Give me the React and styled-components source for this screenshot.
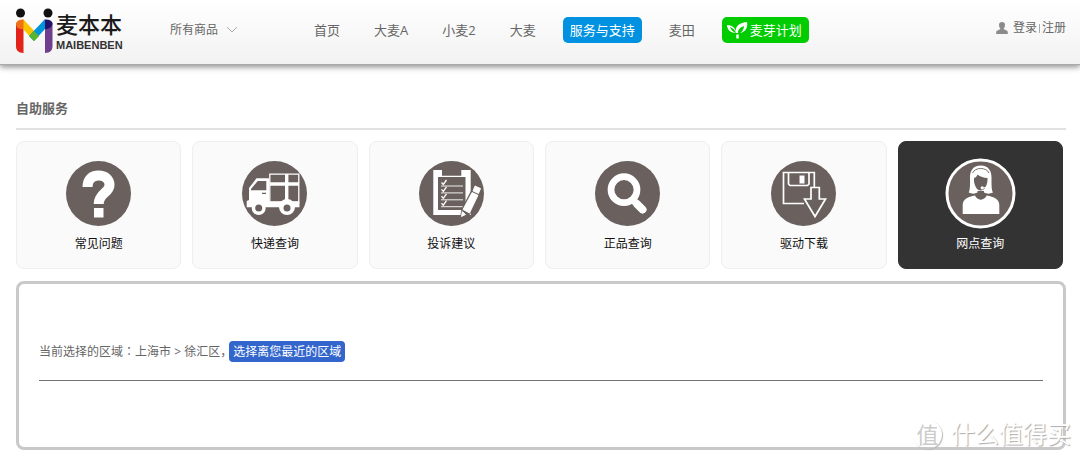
import React from "react";
import styled, { createGlobalStyle } from "styled-components";

const GlobalStyle = createGlobalStyle`
  * { box-sizing: border-box; }
  body {
    margin: 0;
    background: #fff;
    color: #666;
    font-family: "Open Sans", "Noto Sans CJK SC", sans-serif;
    font-size: 12px;
    line-height: 20px;
  }
  a { color: inherit; text-decoration: none; }
  svg { display: block; flex: none; }
`;

const Header = styled.header`
  display: flex;
  align-items: center;
  height: 64px;
  padding: 0 14px 4px 15px;
  background: linear-gradient(#fff, #f2f2f2);
  box-shadow: 0 1px 1px #aaa, 0 3px 6px rgba(0, 0, 0, 0.45);
`;

const Logo = styled.a`
  display: flex;
  align-items: center;
  gap: 3px;
  width: 155px;
  padding-top: 2px;
  color: #1a1a1a;
`;

const LogoText = styled.span`
  display: flex;
  flex-direction: column;
  gap: 6px;
`;

const LogoName = styled.span`
  font-family: "Noto Sans CJK SC", sans-serif;
  font-size: 22px;
  line-height: 22px;
  font-weight: 500;
`;

const LogoLatin = styled.span`
  font: bold 11px/11px "Liberation Sans", sans-serif;
  color: #333;
`;

const CategoryButton = styled.button`
  display: flex;
  align-items: center;
  gap: 8px;
  width: 137px;
  padding: 0;
  border: 0;
  background: none;
  color: #666;
  font: inherit;
  cursor: pointer;
`;

const Nav = styled.nav`
  display: flex;
  align-items: center;
  gap: 20px;
  font-size: 13px;
`;

const NavLink = styled.a`
  display: flex;
  align-items: center;
  gap: 2px;
  height: 26px;
  padding: 0 7px;
  border-radius: 5px;
  white-space: nowrap;
  background: ${(p) => p.$fill || "none"};
  color: ${(p) => (p.$fill ? "#fff" : "#666")};
  & > svg { margin-left: -2px; }
`;

const Account = styled.div`
  display: flex;
  align-items: center;
  gap: 2px;
  margin-left: auto;
  padding-bottom: 4px;
  white-space: nowrap;
  & > svg { margin-right: 3px; }
`;

const Divider = styled.span`
  width: 1px;
  height: 9px;
  background: #aaa;
`;

const Main = styled.main`
  padding: 34px 14px 10px 16px;
`;

const Title = styled.h1`
  margin: 0;
  padding-bottom: 10px;
  border-bottom: 2px solid #e1e1e1;
  font-size: 13px;
  line-height: 20px;
  font-weight: bold;
`;

const Services = styled.div`
  display: grid;
  grid-template-columns: repeat(6, 1fr);
  gap: 11px;
  margin: 11px 3px 12px 0;
`;

const Card = styled.a`
  display: flex;
  flex-direction: column;
  align-items: center;
  gap: 8px;
  height: 128px;
  padding-top: 19px;
  border: 1px solid ${(p) => (p.$active ? "#333" : "#eee")};
  border-radius: 8px;
  background: ${(p) => (p.$active ? "#333" : "#fafafa")};
  color: ${(p) => (p.$active ? "#fff" : "#111")};
`;

const Panel = styled.section`
  position: relative;
  padding: 57px 20px 66px;
  border: 3px solid #c9c9c9;
  border-radius: 8px;
`;

const Region = styled.div`
  display: flex;
  align-items: center;
  padding-bottom: 18px;
  border-bottom: 1px solid #707070;
`;

const Colon = styled.span`
  font-family: "Noto Sans CJK TC", sans-serif;
`;

const RegionButton = styled.button`
  height: 21px;
  margin-left: -3px;
  padding: 0 4px;
  border: 0;
  border-radius: 4px;
  background: #3366cc;
  color: #fff;
  font: inherit;
  cursor: pointer;
`;

const Watermark = styled.div`
  position: absolute;
  right: -8px;
  bottom: -2px;
  display: flex;
  align-items: center;
  gap: 9px;
  color: #fff;
  font-size: 24px;
  line-height: 30px;
  text-shadow: 1px 1px 1px #aaa;
`;

const Seal = styled.span`
  width: 29px;
  height: 29px;
  border-radius: 50%;
  color: #ccc;
  font-size: 22px;
  line-height: 28px;
  text-align: center;
  text-shadow: none;
  box-shadow: 1px 1px 1px #bbb;
`;

const DISC = "#6a615e";

function LogoMark() {
  return (
    <svg width="38" height="46" viewBox="0 0 38 46" aria-hidden="true">
      <circle cx="5.5" cy="5" r="4.5" fill="#111" />
      <circle cx="33" cy="5" r="4.500" fill="#111" />
      <path d="M1 15 8.500 20V45C3 45 1 42 1 38Z" fill="#e2231a" />
      <path d="M37.500 15 30 20V45C35.500 45 37.500 42 37.500 38Z" fill="#6f3f8f" />
      <path d="M8 11 24 28 19 33 8 21Z" fill="#fcc300" />
      <path d="M1 15C2 13 5 11 8.500 11.500V21C5 21 1 21 1 15Z" fill="#ee7318" />
      <path d="M30 11 14 28 19 33 30 21Z" fill="#0095da" />
      <path d="M19 23 24 28 19 33 14 28Z" fill="#57b530" />
      <path d="M30 11.500C34 11 37 13 37.500 15 37.500 19 34 21 30 21Z" fill="#24126a" />
    </svg>
  );
}

function Chevron() {
  return (
    <svg width="12" height="8" viewBox="0 0 12 8" fill="none" stroke="#aaa" aria-hidden="true">
      <path d="M1 1 6 6 11 1" />
    </svg>
  );
}

function Sprout() {
  return (
    <svg width="21" height="18" viewBox="0 0 21 18" aria-hidden="true">
      <path d="M9 12C8 7 10 2 20 1c1 5-1 10-7 11 2-1 4-4 4-7-3 1-6 3-6 7Z" fill="#fff" />
      <path d="M9 12C4 12 0 9 0 4c5 0 9 3 9 8C8 9 6 7 3 6c1 3 3 5 6 6Z" fill="#fff" />
      <path d="M10.500 13.500v4" stroke="#fff" strokeWidth="2.500" />
    </svg>
  );
}

function Person() {
  return (
    <svg width="12" height="12" viewBox="0 0 12 12" fill="#8b8b8b" aria-hidden="true">
      <path d="M6 0c2 0 3 1 3 3S8 6 7.500 7l4 2 .5 3H0l.5-3 4-2C4 6 3 5 3 3S4 0 6 0Z" />
    </svg>
  );
}

function Disc({ ring, children }) {
  return (
    <svg width="65" height="65" viewBox="0 0 65 65" overflow="visible" aria-hidden="true">
      <circle cx="32.5" cy="32.5" r="32.5" fill={DISC} />
      {ring && <circle cx="32.5" cy="32.5" r="33.5" fill="none" stroke="#fff" strokeWidth="3" />}
      {children}
    </svg>
  );
}

const QuestionIcon = () => (
  <Disc>
    <path
      d="M21.500 26C21.500 18 26 14.500 32.500 14.500S43.500 18 43.500 24C43.500 32 32.700 32 32.700 43"
      fill="none"
      stroke="#fff"
      strokeWidth="10"
    />
    <path d="M28 47h9.500v9.500H28Z" fill="#fff" />
  </Disc>
);

const TruckIcon = () => (
  <Disc>
    <path d="M7 27 14.500 17.300H27V40.700H57.500V46.300H4.700V40L7 39Z" fill="#fff" />
    <path d="M9 29.300V28L15.700 20H24.300V29.300ZM20 31.700h4V33h-4Z" fill={DISC} />
    <path d="M27.800 13.200H56.800V41H27.800Z" fill="none" stroke="#fff" strokeWidth="1.300" />
    <path d="M27.800 23H57M44.700 13V41" fill="none" stroke="#fff" strokeWidth="3.400" />
    <circle cx="16.700" cy="47" r="7" fill="#fff" />
    <circle cx="16.700" cy="47" r="3.500" fill={DISC} />
    <circle cx="45" cy="46" r="8" fill="#fff" />
    <circle cx="45" cy="47" r="3.500" fill={DISC} />
  </Disc>
);

const ChecklistIcon = () => (
  <Disc>
    <path d="M14.300 9H23V14.700H42.300V9H51.700V54H14.300Z" fill="#fff" />
    <path d="M19 16H46.500V49H19Z" fill={DISC} />
    {[0, 1, 2, 3].map((i) => (
      <g key={i} fill="none" stroke="#fff" transform={`translate(0 ${i * 6.9})`}>
        <path d="M22.500 21.500 24.300 23.500 27.500 19" strokeWidth="1.300" />
        <path d="M22 25H44" strokeWidth="0.900" />
      </g>
    ))}
    <path
      d="M55.700 24.700 61.700 27.300 50 53 42 57 43.500 48Z"
      fill={DISC}
      stroke={DISC}
      strokeWidth="2"
    />
    <path
      d="M56 25 61.500 27.500 59.500 32.500 54 30ZM53 31.500 59 34.300 50.500 52 44 48.500ZM43.300 50.500 46.500 53.500 42.500 55.500Z"
      fill="#fff"
      stroke="#fff"
      strokeWidth="0.900"
      strokeLinejoin="round"
    />
  </Disc>
);

const SearchIcon = () => (
  <Disc>
    <g fill="none" stroke="#fff">
      <circle cx="29" cy="28.700" r="13" strokeWidth="6.700" />
      <path d="M38 39 43 44" strokeWidth="7" />
      <path d="M42.500 43.500 47.500 48.500" strokeWidth="8" strokeLinecap="round" />
    </g>
  </Disc>
);

const DownloadIcon = () => (
  <Disc>
    <g fill="none" stroke="#fff" strokeWidth="1.700">
      <path d="M33 42.500H12.500V11.500H43.300V26" />
      <path d="M17.500 11.500V23L19 24.500H36.500L38 23V11.500" />
      <path d="M40 26.500H48.300V38H54.500L44 55.500 33.500 38H40Z" />
    </g>
    <path d="M28.500 14.500H33.500V22.500H28.500Z" fill="#fff" />
  </Disc>
);

const AgentIcon = () => (
  <Disc ring>
    <path
      d="M32.700 4.500C25 4.500 21.800 10 22 17 22.200 24 22 29 20.700 31.500 23.500 33 27 33 29.500 31.500H36C38.500 33 42 33 45 31.500 43.500 29 43.500 24 43.500 17 43.700 10 40.500 4.500 32.700 4.500Z"
      fill="#fff"
    />
    <path
      d="M26 17C28 16.500 29 15 29.500 13.500 32 15.500 36 17 39.500 17 40 23 37 29.500 32.700 29.500S25.500 23 26 17Z"
      fill={DISC}
    />
    <path d="M24.500 12C27 6 38.500 6 41 12" fill="none" stroke={DISC} strokeWidth="0.900" />
    <path d="M41 20C41 25 38 27 34.500 27" fill="none" stroke="#fff" strokeWidth="1" />
    <circle cx="34.200" cy="26.800" r="1.600" fill="#fff" />
    <path
      d="M14.700 53V44C14.700 38 20 36 27 34.500 29 40 36.500 40 38.700 34.500 46 36 51.300 38 51.300 44V53Z"
      fill="#fff"
    />
    <path d="M29.500 30H36V36L32.700 38.500 29.500 36Z" fill={DISC} />
  </Disc>
);

const NAV = [
  { label: "首页" },
  { label: "大麦A" },
  { label: "小麦2" },
  { label: "大麦" },
  { label: "服务与支持", fill: "#0092e0" },
  { label: "麦田" },
  { label: "麦芽计划", fill: "#0c0", Icon: Sprout },
];

const SERVICES = [
  { label: "常见问题", Icon: QuestionIcon },
  { label: "快递查询", Icon: TruckIcon },
  { label: "投诉建议", Icon: ChecklistIcon },
  { label: "正品查询", Icon: SearchIcon },
  { label: "驱动下载", Icon: DownloadIcon },
  { label: "网点查询", Icon: AgentIcon, active: true },
];

export default function App() {
  return (
    <>
      <GlobalStyle />
      <Header>
        <Logo href="#">
          <LogoMark />
          <LogoText>
            <LogoName>麦本本</LogoName>
            <LogoLatin>MAIBENBEN</LogoLatin>
          </LogoText>
        </Logo>
        <CategoryButton type="button">
          所有商品
          <Chevron />
        </CategoryButton>
        <Nav>
          {NAV.map(({ label, fill, Icon }) => (
            <NavLink key={label} href="#" $fill={fill}>
              {Icon && <Icon />}
              {label}
            </NavLink>
          ))}
        </Nav>
        <Account>
          <Person />
          <a href="#">登录</a>
          <Divider />
          <a href="#">注册</a>
        </Account>
      </Header>
      <Main>
        <Title>自助服务</Title>
        <Services>
          {SERVICES.map(({ label, Icon, active }) => (
            <Card key={label} href="#" $active={active}>
              <Icon />
              {label}
            </Card>
          ))}
        </Services>
        <Panel>
          <Region>
            <span>
              当前选择的区域<Colon>：</Colon>上海市 &gt; 徐汇区，
            </span>
            <RegionButton type="button">选择离您最近的区域</RegionButton>
          </Region>
          <Watermark>
            <Seal>值</Seal>
            什么值得买
          </Watermark>
        </Panel>
      </Main>
    </>
  );
}
